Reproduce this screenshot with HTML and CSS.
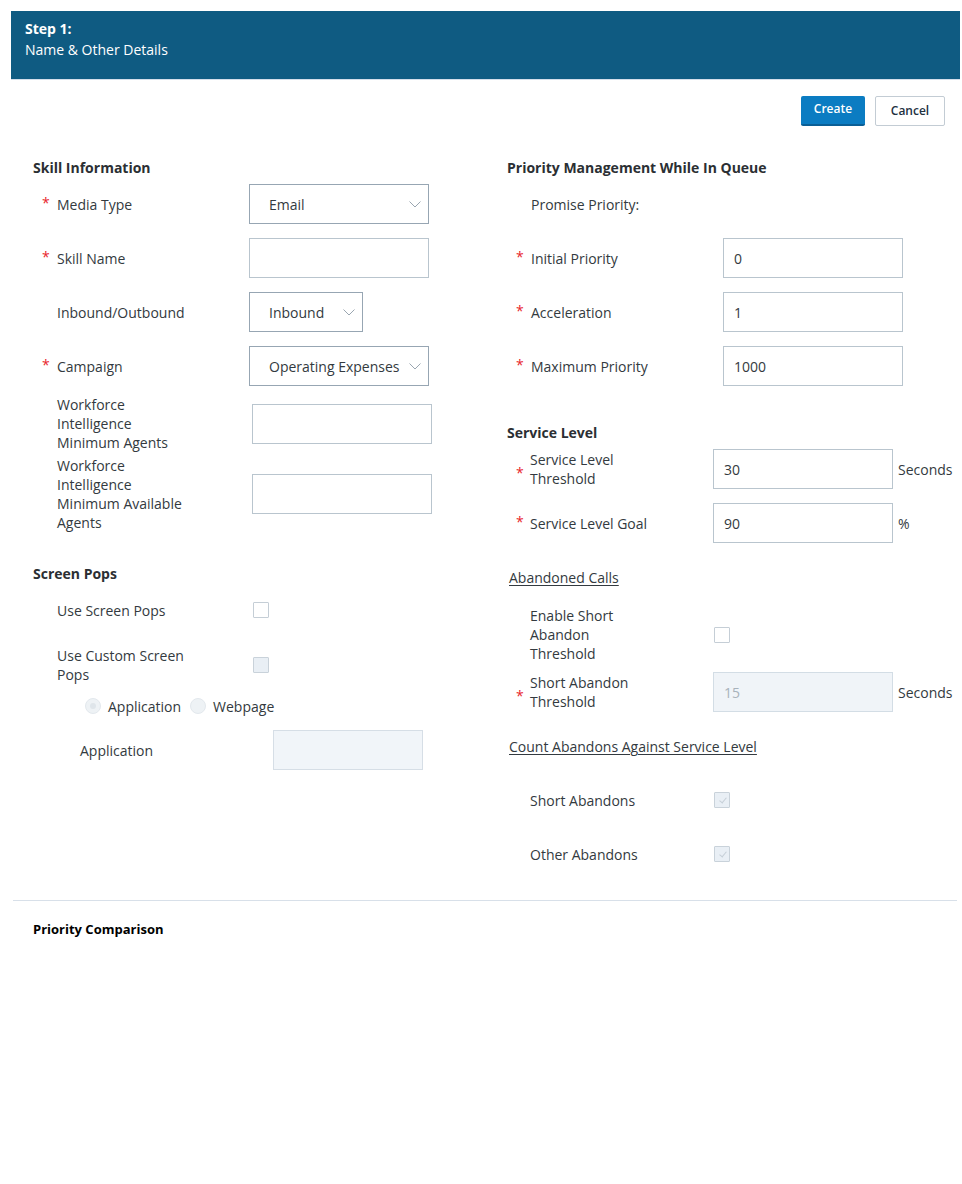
FILE: index.html
```html
<!DOCTYPE html>
<html lang="en">
<head>
  <meta charset="UTF-8" />
  <meta name="viewport" content="width=device-width,initial-scale=1.0" />
  <title>Create Skill</title>
  <link rel="stylesheet" href="styles.css">
</head>
<body>
<div class="page">

  <header class="step-bar">
    <div class="step-num">Step 1:</div>
    <div class="step-name">Name &amp; Other Details</div>
  </header>

  <div class="actions">
    <button class="btn btn-primary">Create</button>
    <button class="btn">Cancel</button>
  </div>

  <div class="columns">

    <!-- left column -->
    <div class="col">
      <h3 class="section-title">Skill Information</h3>

      <div class="row mb14">
        <span class="req">*</span><span class="lbl">Media Type</span>
        <div class="select">Email
          <svg class="chev" width="12" height="7" viewBox="0 0 12 7"><path d="M0.5 0.5 L6 6 L11.5 0.5" fill="none" stroke="#9aa6b1" stroke-width="1"/></svg>
        </div>
      </div>

      <div class="row mb14">
        <span class="req">*</span><span class="lbl">Skill Name</span>
        <input class="field" type="text">
      </div>

      <div class="row mb14">
        <span class="req"></span><span class="lbl">Inbound/Outbound</span>
        <div class="select short">Inbound
          <svg class="chev" width="12" height="7" viewBox="0 0 12 7"><path d="M0.5 0.5 L6 6 L11.5 0.5" fill="none" stroke="#9aa6b1" stroke-width="1"/></svg>
        </div>
      </div>

      <div class="row mb9">
        <span class="req">*</span><span class="lbl">Campaign</span>
        <div class="select">Operating Expenses
          <svg class="chev" width="12" height="7" viewBox="0 0 12 7"><path d="M0.5 0.5 L6 6 L11.5 0.5" fill="none" stroke="#9aa6b1" stroke-width="1"/></svg>
        </div>
      </div>

      <div class="row mb4">
        <span class="req"></span><span class="lbl multi">Workforce Intelligence Minimum Agents</span>
        <input class="field nudge" type="text">
      </div>

      <div class="row">
        <span class="req"></span><span class="lbl multi">Workforce Intelligence Minimum Available Agents</span>
        <input class="field nudge" type="text">
      </div>

      <h3 class="section-title mt32">Screen Pops</h3>

      <div class="row mb15">
        <span class="req"></span><span class="lbl">Use Screen Pops</span>
        <span class="check"></span>
      </div>

      <div class="row">
        <span class="req"></span><span class="lbl multi">Use Custom Screen Pops</span>
        <span class="check disabled"></span>
      </div>

      <div class="radios">
        <span class="radio on"></span><span class="radio-lbl">Application</span>
        <span class="radio"></span><span class="radio-lbl">Webpage</span>
      </div>

      <div class="row sub">
        <span class="lbl">Application</span>
        <input class="field app" type="text" disabled>
      </div>
    </div>

    <!-- right column -->
    <div class="col">
      <h3 class="section-title">Priority Management While In Queue</h3>

      <div class="row mb14">
        <span class="req"></span><span class="lbl">Promise Priority:</span>
      </div>

      <div class="row mb14">
        <span class="req">*</span><span class="lbl">Initial Priority</span>
        <input class="field" type="text" value="0">
      </div>

      <div class="row mb14">
        <span class="req">*</span><span class="lbl">Acceleration</span>
        <input class="field" type="text" value="1">
      </div>

      <div class="row">
        <span class="req">*</span><span class="lbl">Maximum Priority</span>
        <input class="field" type="text" value="1000">
      </div>

      <h3 class="section-title mt37">Service Level</h3>

      <div class="row sl mb14">
        <span class="req mid">*</span><span class="lbl multi">Service Level Threshold</span>
        <input class="field" type="text" value="30"><span class="unit">Seconds</span>
      </div>

      <div class="row sl">
        <span class="req">*</span><span class="lbl">Service Level Goal</span>
        <input class="field" type="text" value="90"><span class="unit">%</span>
      </div>

      <h3 class="link-title mt25">Abandoned Calls</h3>

      <div class="row sl mt18 mb9">
        <span class="req"></span><span class="lbl multi">Enable Short Abandon Threshold</span>
        <span class="check"></span>
      </div>

      <div class="row sl">
        <span class="req mid">*</span><span class="lbl multi">Short Abandon Threshold</span>
        <input class="field" type="text" value="15" disabled><span class="unit">Seconds</span>
      </div>

      <h3 class="link-title mt25">Count Abandons Against Service Level</h3>

      <div class="row sl mt23 mb14">
        <span class="req"></span><span class="lbl">Short Abandons</span>
        <span class="check disabled checked"></span>
      </div>

      <div class="row sl">
        <span class="req"></span><span class="lbl">Other Abandons</span>
        <span class="check disabled checked"></span>
      </div>
    </div>

  </div>

  <hr class="divider">

  <h3 class="footer-title">Priority Comparison</h3>

</div>
</body>
</html>
```

FILE: styles.css
```css
body {
  margin: 0;
  background: #fff;
  color: #333a40;
  font-family: 'Open Sans', sans-serif;
  font-size: 14px;
}

.page {
  padding: 11px 2px 0 11px;
}

/* step header */

.step-bar {
  background: #0f5b82;
  color: #fff;
  height: 69px;
  padding: 8px 14px 0;
  box-sizing: border-box;
  border-bottom: 1px solid #d4deea;
}

.step-num {
  font-weight: 700;
  line-height: 20px;
}

.step-name {
  line-height: 20px;
  margin-top: 1px;
}

/* buttons */

.actions {
  display: flex;
  justify-content: flex-end;
  gap: 10px;
  padding-right: 15px;
  margin-top: 16px;
}

.btn {
  width: 70px;
  height: 30px;
  padding: 0;
  font-family: 'Open Sans', sans-serif;
  font-size: 12px;
  font-weight: 600;
  color: #22313f;
  background: #fff;
  border: 1px solid #c3ccd4;
  border-radius: 2px;
  padding-bottom: 2px;
}

.btn-primary {
  width: 64px;
  color: #fff;
  background: #0b7cc2;
  border: none;
  border-bottom: 2px solid #0a5f96;
  padding-bottom: 4px;
}

/* two column form */

.columns {
  display: flex;
  margin-top: 32px;
  padding-left: 22px;
}

.col {
  display: flex;
  flex-direction: column;
  align-items: flex-start;
  flex: 0 0 474px;
}

.col + .col {
  flex: 1 1 auto;
}

.section-title {
  margin: 0 0 6px;
  font-size: 14px;
  font-weight: 700;
  line-height: 20px;
  color: #2b2f33;
}

.link-title {
  margin: 0 0 0 2px;
  font-size: 14px;
  font-weight: 400;
  line-height: 20px;
  text-decoration: underline;
  text-underline-offset: 2px;
  color: #333a40;
}

.row {
  display: flex;
  align-items: center;
  min-height: 40px;
  padding-left: 9px;
}

.req {
  flex: 0 0 15px;
  align-self: center;
  color: #e8262b;
  line-height: 19px;
  margin-top: -4px;
}

.req.mid {
  margin-top: 6px;
}

.lbl {
  flex: 0 0 132px;
  margin-right: 60px;
  line-height: 19px;
}

.row.sl .lbl {
  flex-basis: 118px;
  margin-left: -1px;
  margin-right: 65px;
}

.field {
  width: 180px;
  height: 40px;
  box-sizing: border-box;
  padding: 0 10px;
  border: 1px solid #b9c5ce;
  border-radius: 0;
  font-family: 'Open Sans', sans-serif;
  font-size: 14px;
  color: #333a40;
  background: #fff;
}

.field:disabled {
  background: #f0f4f8;
  border-color: #d3dde5;
  color: #a8b2bb;
}

.field.nudge {
  margin-left: 3px;
}

.select {
  position: relative;
  width: 180px;
  height: 40px;
  box-sizing: border-box;
  padding-left: 19px;
  border: 1px solid #97a6b3;
  display: flex;
  align-items: center;
  white-space: nowrap;
}

.select.short {
  width: 114px;
}

.chev {
  position: absolute;
  right: 7px;
  top: 16px;
}

.unit {
  margin-left: 5px;
}

.check {
  width: 16px;
  height: 16px;
  box-sizing: border-box;
  border: 1px solid #c5ced6;
  border-radius: 1px;
  margin-left: 4px;
  background: #fff;
  position: relative;
}

.row.sl .check {
  margin-left: 1px;
}

.check.disabled {
  background: #e9eff5;
  border-color: #c9d2da;
}

.check.checked::after {
  content: "";
  position: absolute;
  left: 6px;
  top: 3px;
  width: 3px;
  height: 6px;
  border: solid #c6cfd7;
  border-width: 0 1px 1px 0;
  transform: rotate(40deg);
}

.radios {
  display: flex;
  align-items: center;
  height: 20px;
  margin-top: 11px;
  padding-left: 52px;
}

.radio {
  width: 16px;
  height: 16px;
  box-sizing: border-box;
  border-radius: 50%;
  border: 1px solid #e3e8ed;
  background: #eef2f5;
  position: relative;
}

.radio.on::after {
  content: "";
  position: absolute;
  left: 4px;
  top: 4px;
  width: 6px;
  height: 6px;
  border-radius: 50%;
  background: #dfe5ea;
}

.radio-lbl {
  margin: 0 9px 0 7px;
}

.row.sub {
  margin-top: 14px;
  padding-left: 47px;
}

.row.sub .lbl {
  flex-basis: 140px;
  margin-right: 53px;
}

.field.app {
  width: 150px;
  background: #f1f5f9;
  border-color: #d6dee6;
}

/* spacing helpers */

.mb4 { margin-bottom: 4px; }
.mb9 { margin-bottom: 9px; }
.mb14 { margin-bottom: 14px; }
.mb15 { margin-bottom: 15px; }
.mt18 { margin-top: 18px; }
.mt23 { margin-top: 23px; }
.mt25 { margin-top: 25px; }

.section-title.mt32 { margin-top: 32px; }
.section-title.mt37 { margin-top: 37px; }

/* footer */

.divider {
  border: none;
  border-top: 1px solid #d8e0e9;
  margin: 26px 3px 0 2px;
}

.footer-title {
  margin: 18px 0 0 22px;
  font-size: 13px;
  font-weight: 700;
  line-height: 20px;
  color: #000;
}
```
